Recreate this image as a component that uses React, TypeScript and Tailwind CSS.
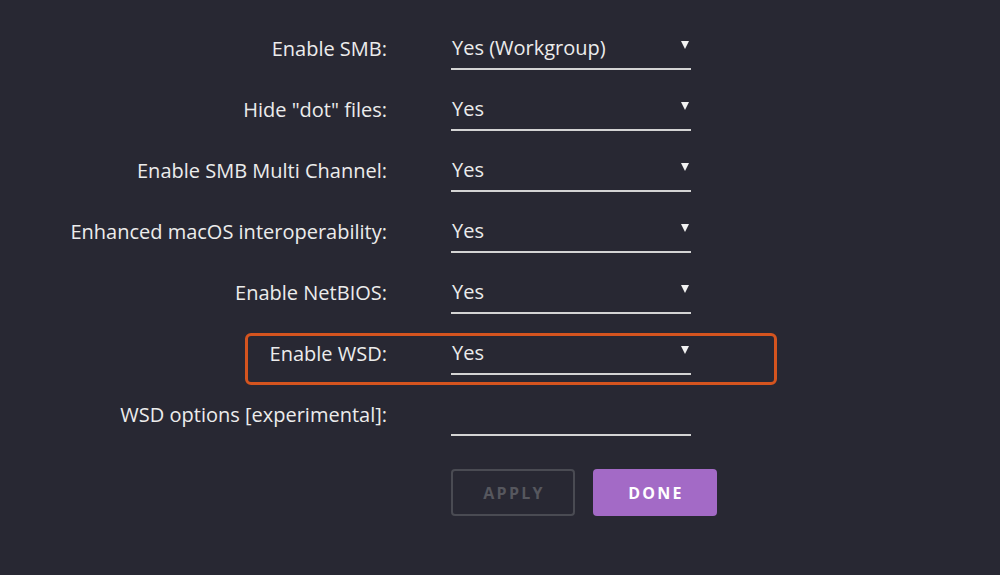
const rows: { label: string; value: string; select: boolean; marked?: boolean }[] = [
  { label: 'Enable SMB:', value: 'Yes (Workgroup)', select: true },
  { label: 'Hide "dot" files:', value: 'Yes', select: true },
  { label: 'Enable SMB Multi Channel:', value: 'Yes', select: true },
  { label: 'Enhanced macOS interoperability:', value: 'Yes', select: true },
  { label: 'Enable NetBIOS:', value: 'Yes', select: true },
  { label: 'Enable WSD:', value: 'Yes', select: true, marked: true },
  { label: 'WSD options [experimental]:', value: '', select: false },
];

function Row({ label, value, select, marked }: (typeof rows)[number]) {
  return (
    <div className="relative flex items-center h-[44px] mb-[17px]">
      {marked && (
        <div className="absolute left-[245px] top-[2px] w-[532px] h-[52px] rounded-[6px] border-[3px] border-[#d4541f] pointer-events-none" />
      )}
      <div className="w-[387px] text-right whitespace-nowrap pt-px">{label}</div>
      <div className="ml-[64px] w-[240px] h-full flex items-center justify-between border-b-2 border-[#d4d4d4] pl-px pr-[2px]">
        <span className="pt-px">{value}</span>
        {select && (
          <svg width="8" height="8" viewBox="0 0 8 8" className="mb-[4px]">
            <polygon points="0,0 8,0 4,8" fill="#f2f2f2" />
          </svg>
        )}
      </div>
    </div>
  );
}

export default function App() {
  return (
    <div className="w-[1000px] h-[575px] bg-[#282833] text-[#ececec] text-[20px] pt-[26px] font-['Open_Sans',sans-serif] overflow-hidden">
      {rows.map((r) => (
        <Row key={r.label} {...r} />
      ))}
      <div className="flex ml-[451px] mt-[33px] gap-[18px]">
        <button className="w-[124px] h-[47px] rounded-[4px] border-2 border-[#4a4b53] text-[#56575e] text-[16px] font-bold tracking-[0.14em] pl-[2px]">
          APPLY
        </button>
        <button className="w-[124px] h-[47px] rounded-[4px] bg-[#a36ac6] text-white text-[16px] font-bold tracking-[0.14em] pl-[2px]">
          DONE
        </button>
      </div>
    </div>
  );
}
